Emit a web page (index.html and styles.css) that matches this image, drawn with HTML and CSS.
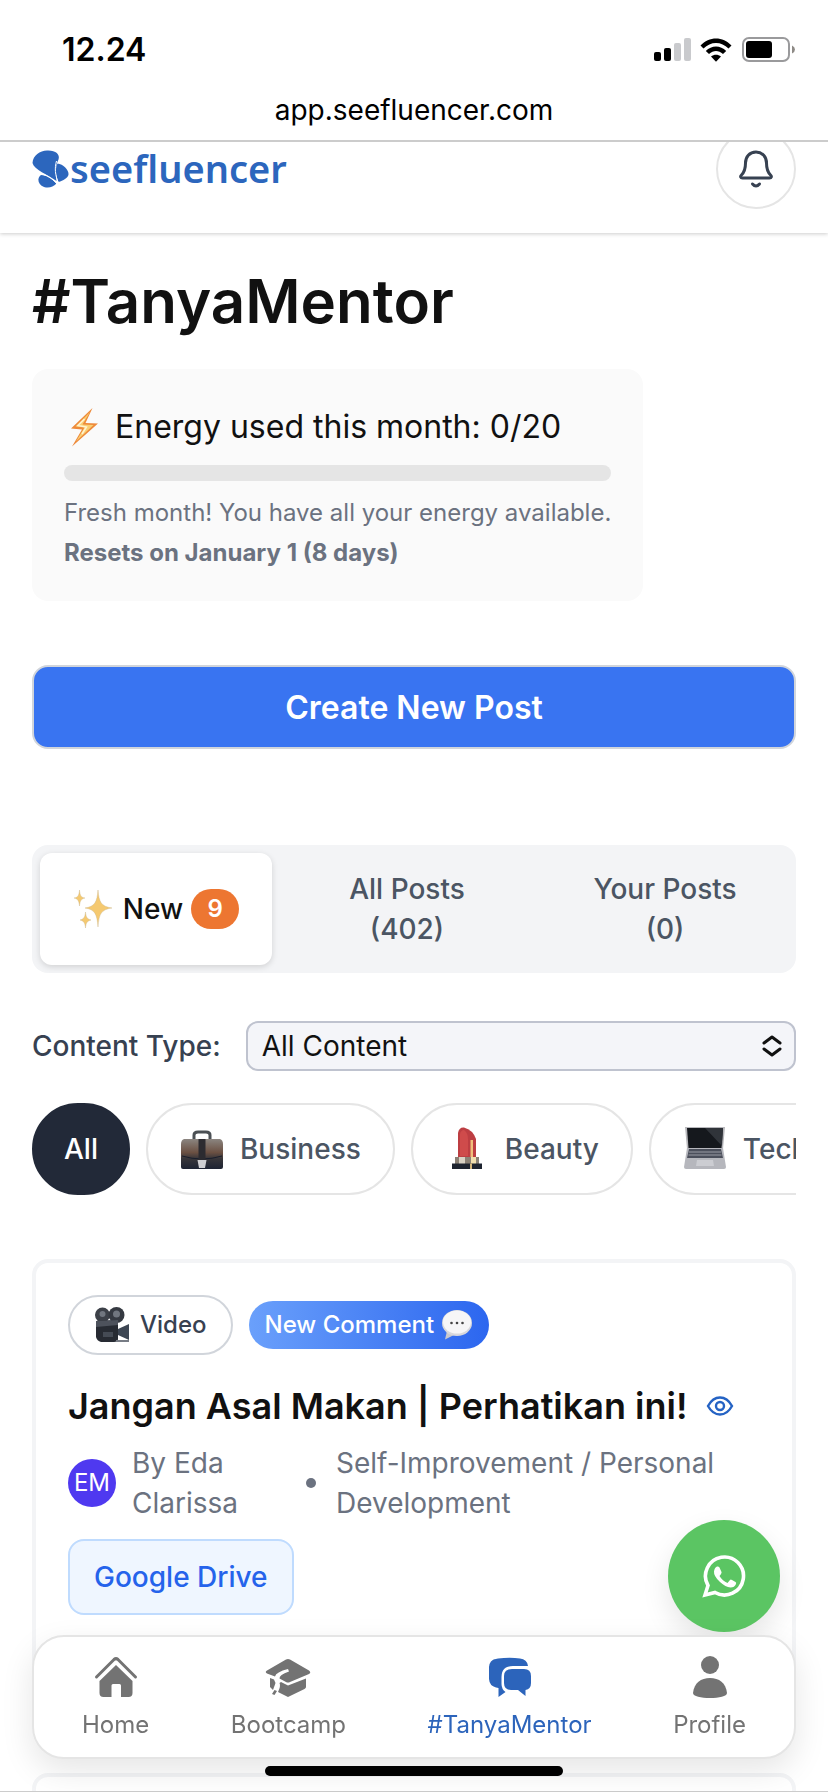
FILE: index.html
```html
<!DOCTYPE html>
<html lang="id">
<head>
<meta charset="utf-8">
<meta name="viewport" content="width=device-width, initial-scale=1">
<title>#TanyaMentor</title>
<link rel="stylesheet" href="styles.css">
</head>
<body>
<div class="device-bar">
  <div class="status">
    <span class="clock">12.24</span>
    <div class="status-icons">
      <svg width="38" height="24" viewBox="0 0 38 24" aria-hidden="true">
        <rect x="0" y="14" width="7" height="9" rx="2"/>
        <rect x="10" y="10" width="7" height="13" rx="2"/>
        <rect x="20" y="5" width="7" height="18" rx="2" fill="#c9cacd"/>
        <rect x="30" y="0" width="7" height="23" rx="2" fill="#c9cacd"/>
      </svg>
      <svg width="34" height="24" viewBox="0 0 34 24" aria-hidden="true">
        <path d="M0.500 7.500C9 -2 23 -2 31.500 7.500L28.500 10.500C21.500 3 10.500 3 3.500 10.500Z"/>
        <path d="M5.800 13C11.500 7 20.500 7 26.200 13L23 16C18.500 12 13.500 12 9 16Z"/>
        <path d="M11 18.500C14 16 18 16 21 18.500L16 23.800Z"/>
      </svg>
      <svg width="54" height="26" viewBox="0 0 54 26" aria-hidden="true">
        <rect x="1" y="1" width="46" height="23" rx="6" fill="none" stroke="#9a9a9c" stroke-width="2"/>
        <rect x="4" y="4" width="26" height="17" rx="3"/>
        <path d="M50 8.500Q53 10 53 12.500T50 16.500Z" fill="#8e8a86"/>
      </svg>
    </div>
  </div>
  <div class="address">app.seefluencer.com</div>
</div>

<div class="page">
  <header class="header">
    <a class="logo" href="#" aria-label="seefluencer">
      <svg width="38" height="38" viewBox="0 0 38 38" aria-hidden="true">
        <path d="M0.500 13C1 5 8 1 15 0.500C23 0 28.500 4 26.500 9.500C24 15 23.500 18 24.500 31C16 24.500 2 20 0.500 13Z"/>
        <path d="M25.500 13.500C31 14 37 20 36.500 24.500C36 28 31 30.500 26.500 32C23.500 26 23 18 25.500 13.500Z"/>
        <path d="M9 25C14 25 20 28.500 24.500 33.500C21 37 17 38.500 12 37C6 35 4.500 28 9 25Z"/>
        <path d="M24.500 11C22.500 18 23 25 26.500 33" fill="none" stroke="#fff" stroke-width="1"/>
        <path d="M7 23.500C14 24.500 20 28 25 34" fill="none" stroke="#fff" stroke-width="1"/>
      </svg>
      <span class="logo-text">seefluencer</span>
    </a>
    <button class="bell" type="button" aria-label="Notifications">
      <svg width="36" height="40" viewBox="0 0 36 40" fill="none" stroke="#374151" stroke-width="3" stroke-linecap="round" stroke-linejoin="round" aria-hidden="true">
        <path d="M18 3C11.500 3 7.500 8 7.500 14C7.500 21 6 23.500 3.500 26C2 27.500 2.500 29 4.500 29H31.500C33.500 29 34 27.500 32.500 26C30 23.500 28.500 21 28.500 14C28.500 8 24.500 3 18 3Z"/>
        <path d="M14.500 35Q18 39 21.500 35"/>
      </svg>
    </button>
  </header>

  <main class="main">
    <h1 class="title">#TanyaMentor</h1>

    <section class="energy">
      <p class="energy-head">
        <svg width="36" height="40" viewBox="0 0 36 40" aria-hidden="true">
          <path d="M28.500 1L7 21.500L18 22.500L8 39.500L34 16.500L21.500 16Z" fill="#ee8a3a"/>
          <path d="M26 5L11.500 19.500L20.500 20.500L12 34.500L29.500 18L18.500 17.500Z" fill="#f9cf73"/>
          <path d="M20.500 12L14 18.500L22.500 20L18 27" fill="none" stroke="#fff3d0" stroke-width="1.500"/>
        </svg>
        Energy used this month: 0/20
      </p>
      <div class="meter" role="progressbar" aria-label="Energy used" aria-valuenow="0" aria-valuemin="0" aria-valuemax="20"></div>
      <p class="energy-note">Fresh month! You have all your energy available.</p>
      <p class="energy-reset">Resets on January 1 (8 days)</p>
    </section>

    <button class="create" type="button">Create New Post</button>

    <div class="tabs" role="tablist">
      <button class="tab tab-active" type="button" role="tab" aria-selected="true">
        <svg width="42" height="38" viewBox="0 0 42 38" fill="#f5c970" stroke="#c9b58a" stroke-width=".4" aria-hidden="true">
          <path d="M25 0C26 12 28 16.500 39 18C28 19.500 26 24 25 37C24 24 22 19.500 12 18C22 16.500 24 12 25 0Z"/>
          <path d="M6.500 0C7 5.500 8 7.500 12 8C8 8.800 7 11 6.500 16C6 11 5 8.800 1 8C5 7.500 6 5.500 6.500 0Z"/>
          <path d="M12.500 22C13 27 14 29 18 30C14 31 13 33 12.500 38C12 33 11 31 7 30C11 29 12 27 12.500 22Z"/>
        </svg>
        <span>New</span>
        <span class="count">9</span>
      </button>
      <button class="tab" type="button" role="tab" aria-selected="false"><span>All Posts<br>(402)</span></button>
      <button class="tab" type="button" role="tab" aria-selected="false"><span>Your Posts<br>(0)</span></button>
    </div>

    <div class="filter">
      <label class="filter-label" for="content-type">Content Type:</label>
      <div class="select-wrap">
        <select class="select" id="content-type">
          <option>All Content</option>
        </select>
        <svg class="select-arrows" width="20" height="22" viewBox="0 0 20 22" fill="none" stroke="#111" stroke-width="3" stroke-linecap="round" stroke-linejoin="round" aria-hidden="true">
          <path d="M2 8L10 2L18 8M2 14L10 20L18 14"/>
        </svg>
      </div>
    </div>

    <div class="topics">
      <button class="topic topic-active" type="button">All</button>
      <button class="topic" type="button">
        <svg width="44" height="44" viewBox="0 0 44 44" aria-hidden="true">
          <defs><linearGradient id="leather" x1="0" y1="0" x2="0" y2="1"><stop offset="0" stop-color="#8b8580"/><stop offset=".45" stop-color="#6b5042"/><stop offset=".65" stop-color="#38363a"/><stop offset="1" stop-color="#1d2333"/></linearGradient></defs>
          <path d="M14 13V8Q14 5 18 5H26Q30 5 30 8V13" fill="none" stroke="#4b5054" stroke-width="3"/>
          <path d="M4 12H40Q43 13 43 17V40Q43 42 41 42H3Q1 42 1 40V17Q1 13 4 12Z" fill="url(#leather)"/>
          <path d="M2 29Q22 35 42 29" fill="none" stroke="#191e2c" stroke-width="1"/>
          <rect x="18.500" y="12" width="7" height="22" fill="#2c2b30"/>
          <path d="M17.500 33H26.500L25 41H19Z" fill="#cfcfd2"/>
        </svg>
        Business
      </button>
      <button class="topic" type="button">
        <svg width="44" height="44" viewBox="0 0 44 44" aria-hidden="true">
          <path d="M13 32V6Q14 0 19 0.500Q28 3 31 12V32Z" fill="#bd3e42"/>
          <path d="M15 29V7Q16 3 19 3Q23 6 23 12V29Z" fill="#cf4b4b"/>
          <path d="M25.500 13H28V31H25.500Z" fill="#f0c07b"/>
          <path d="M10 30H34V37H10Z" fill="#8b8175"/>
          <path d="M14 30H20V37H14Z" fill="#d9d2c4"/><path d="M26 30H31V37H26Z" fill="#f1dfae"/>
          <path d="M7 36.500H37V42H7Z" fill="#1e2430"/><path d="M25 36.500H27V42H25Z" fill="#d5b77c"/>
        </svg>
        Beauty
      </button>
      <button class="topic" type="button">
        <svg width="44" height="44" viewBox="0 0 44 44" aria-hidden="true">
          <path d="M2 0H42L40 22H4Z" fill="#b8b8bc"/>
          <path d="M4 1H40L38.500 21H5.500Z" fill="#15181d"/>
          <path d="M22 1H40L39 19Z" fill="#30343a"/>
          <path d="M4 21H40L43 40Q43 42 41 42H3Q1 42 1 40Z" fill="#b6b7bd"/>
          <path d="M6 22H38L40 31H4Z" fill="#4b4f5b"/>
          <path d="M6 25H38M5.500 28H38.500" stroke="#9a9ca5"/>
          <path d="M14 33H30L31 39H13Z" fill="#cccdd2"/>
        </svg>
        Tech
      </button>
    </div>

    <article class="post">
      <div class="post-tags">
        <span class="kind">
          <svg width="36" height="36" viewBox="0 0 36 36" aria-hidden="true">
            <circle cx="8.500" cy="8" r="7.500" fill="#3c4048"/><circle cx="22.500" cy="8" r="8" fill="#353941"/>
            <circle cx="8.500" cy="7" r="3" fill="#71767f"/><circle cx="22.500" cy="7" r="3.500" fill="#71767f"/>
            <path d="M2 14L24 13V32Q24 35 20 35H7Q3 34 2 30Z" fill="#272b33"/>
            <path d="M2 14L24 13V18L2 20Z" fill="#4d525c"/>
            <path d="M24 22L35 17V33L24 28Z" fill="#3d4653"/>
            <rect x="9" y="25" width="10" height="5" fill="#454b55"/>
            <path d="M22 34H35" stroke="#777c85" stroke-width="2"/>
          </svg>
          Video
        </span>
        <span class="fresh">
          New Comment
          <svg width="32" height="32" viewBox="0 0 32 32" aria-hidden="true">
            <path d="M6 22L4 30.500L13 26Z" fill="#c9c9ce"/>
            <ellipse cx="16" cy="14" rx="15" ry="13" fill="#d8d8dc"/>
            <ellipse cx="16" cy="13" rx="14" ry="11.500" fill="#f6f6f7"/>
            <g fill="#444"><circle cx="10.500" cy="14" r="1.300"/><circle cx="16" cy="14" r="1.300"/><circle cx="21.500" cy="14" r="1.300"/></g>
          </svg>
        </span>
      </div>
      <div class="post-heading">
        <h2 class="post-title">Jangan Asal Makan | Perhatikan ini!</h2>
        <svg width="28" height="20" viewBox="0 0 28 20" fill="none" stroke="#2563c4" stroke-width="2.400" aria-hidden="true">
          <path d="M2 10C5 4.500 9 1.500 14 1.500S23 4.500 26 10C23 15.500 19 18.500 14 18.500S5 15.500 2 10Z"/>
          <circle cx="14" cy="10" r="4"/>
        </svg>
      </div>
      <div class="meta">
        <span class="avatar">EM</span>
        <span class="author">By Eda Clarissa</span>
        <span class="dot"></span>
        <span class="category">Self-Improvement / Personal Development</span>
      </div>
      <a class="drive" href="#">Google Drive</a>
    </article>

    <article class="post"></article>
  </main>
</div>

<a class="whatsapp" href="#" aria-label="WhatsApp">
  <svg width="44" height="44" viewBox="0 0 44 44" aria-hidden="true">
    <path d="M3 41L6 31.500A19 19 0 1 1 13 38.500Z" fill="none" stroke="#fff" stroke-width="3.600"/>
    <path d="M15 12.500Q16.500 12 17.500 13.500L19.500 18Q20 19 17.500 22Q20.500 27 25.500 29L28 26Q28.700 25.200 30 26L33.500 28Q34.500 28.700 34 30Q32.500 33.500 28.500 33.500Q23.500 33 18 28Q11.500 22 12 17.500Q12.500 13.500 15 12.500Z" fill="#fff"/>
  </svg>
</a>

<nav class="nav">
  <a class="nav-item" href="#">
    <svg width="44" height="44" viewBox="0 0 44 44" aria-hidden="true">
      <path d="M2.500 22L20 4.500Q22 2.800 24 4.500L41.500 22" fill="none" stroke="currentColor" stroke-width="3" stroke-linecap="round"/>
      <path d="M22 10L38.500 26V38Q38.500 42 34.500 42H27V30.500Q27 29 25.500 29H19Q17.500 29 17.500 30.500V42H9.500Q5.500 42 5.500 38V26Z"/>
    </svg>
    Home
  </a>
  <a class="nav-item" href="#">
    <svg width="48" height="44" viewBox="0 0 48 44" aria-hidden="true">
      <path d="M24 4Q25 4 26 4.500L45 15.500Q47.500 17.500 45 19L26 27Q24 28 22 27L15.500 23.500Q15 20 25 16.500L24 14Q12 17 11 21.500L3 18.500Q0.500 17 3 15.500L22 4.500Q23 4 24 4Z"/>
      <path d="M17 27L24 30.500L42 23.500V32Q42 33 40.500 34L24 42L14 37Q17 31 15.500 28Z"/>
      <path d="M6 23L10 24.500L11.500 28L9 35L6 32Z"/>
      <path d="M10.500 35L13 36L10.500 40L8 39Z"/>
    </svg>
    Bootcamp
  </a>
  <a class="nav-item nav-current" href="#" aria-current="page">
    <svg width="44" height="44" viewBox="0 0 44 44" aria-hidden="true">
      <path d="M10 3.500Q22 2 32 3.500Q39 4 40 11H25Q13.500 11 13.500 22V29Q13.500 34 17.500 37L10.500 42V33Q1.500 32 1 24V12Q1.500 4.500 10 3.500Z"/>
      <path d="M24 14H36Q43 14 43 21V28Q43 34 37.500 35V41L30 35H23Q16 35 16 28V21Q16 14 24 14Z"/>
    </svg>
    #TanyaMentor
  </a>
  <a class="nav-item" href="#">
    <svg width="44" height="44" viewBox="0 0 44 44" aria-hidden="true">
      <circle cx="22" cy="10" r="9"/>
      <path d="M5 38C6 28 13 23 22 23S38 28 39 38C39 41.500 31 43 22 43S5 41.500 5 38Z"/>
    </svg>
    Profile
  </a>
</nav>
<div class="home-indicator"></div>
</body>
</html>
```

FILE: styles.css
```css
* {
  box-sizing: border-box;
}

body {
  margin: 0;
  height: 100vh;
  display: flex;
  flex-direction: column;
  overflow: hidden;
  background: #fff;
  color: #111;
  font-family: Inter, "Liberation Sans", sans-serif;
  font-size: 28px;
  line-height: 40px;
}

button, select {
  font: inherit;
  color: inherit;
  margin: 0;
}

a {
  color: inherit;
  text-decoration: none;
}

h1, h2, p {
  margin: 0;
}

svg {
  display: block;
  flex: none;
}

.device-bar {
  flex: none;
  border-bottom: 2px solid #ccc;
  color: #000;
}

.status {
  display: flex;
  justify-content: space-between;
  align-items: center;
  padding: 28px 32px 0 62px;
  height: 72px;
}

.clock {
  font-size: 32px;
  font-weight: 600;
}

.status-icons {
  display: flex;
  align-items: center;
  gap: 8px;
}

.address {
  padding: 18px 0 10px;
  text-align: center;
}

.page {
  flex: 1;
  min-height: 0;
  overflow: hidden;
  border-bottom: 1px solid #ccc;
}

/* Scrolled a little way under the address bar. */
.header {
  height: 128px;
  margin-top: -37px;
  padding: 0 32px;
  display: flex;
  align-items: center;
  justify-content: space-between;
  box-shadow: 0 1px 4px rgba(0, 0, 0, .2);
}

.logo {
  display: flex;
  align-items: center;
  color: #2c66bd;
  fill: currentColor;
}

.logo-text {
  padding-bottom: 2px;
  font-family: "Noto Sans", sans-serif;
  font-size: 38px;
  font-weight: 600;
}

.bell {
  width: 80px;
  height: 80px;
  display: grid;
  place-items: center;
  border: 2px solid #e5e5e5;
  border-radius: 50%;
  background: #fff;
}

.main {
  padding: 32px;
}

.title {
  font-size: 60px;
  line-height: 72px;
  font-weight: 600;
}

.energy {
  width: fit-content;
  margin-top: 32px;
  padding: 32px;
  border-radius: 16px;
  background: #fafafa;
}

.energy-head {
  display: flex;
  align-items: center;
  gap: 15px;
  padding-top: 2px;
  font-size: 32px;
  line-height: 48px;
}

.meter {
  height: 16px;
  margin: 14px 0 16px;
  border-radius: 8px;
  background: #e5e5e5;
}

.energy-note,
.energy-reset {
  font-size: 24px;
  line-height: 32px;
  color: #6b7280;
}

.energy-reset {
  margin-top: 8px;
  font-weight: 700;
}

.create {
  display: block;
  width: 100%;
  margin-top: 64px;
  padding: 21px 20px 19px;
  border: 2px solid #d1d5db;
  border-radius: 16px;
  background: #3974f1;
  color: #fff;
  font-size: 32px;
  font-weight: 600;
}

.tabs {
  display: grid;
  grid-template-columns: 232fr 270fr 246fr;
  margin-top: 96px;
  padding: 8px;
  border-radius: 16px;
  background: #f3f4f6;
}

.tab {
  display: flex;
  align-items: center;
  justify-content: center;
  gap: 8px;
  padding: 16px;
  border: 0;
  border-radius: 12px;
  background: none;
  color: #4b5563;
  font-weight: 500;
}

.tab-active {
  background: #fff;
  color: #111;
  box-shadow: 0 2px 6px rgba(0, 0, 0, .14);
}

.count {
  min-width: 48px;
  border-radius: 20px;
  background: #ed7631;
  color: #fff;
  font-size: 24px;
  font-weight: 600;
  text-align: center;
}

.filter {
  display: flex;
  align-items: center;
  gap: 25px;
  margin-top: 48px;
}

.filter-label {
  color: #374151;
  font-weight: 500;
}

.select-wrap {
  flex: 1;
  position: relative;
}

.select {
  display: block;
  width: 100%;
  height: 50px;
  padding: 0 48px 0 14px;
  border: 2px solid #bfc3cf;
  border-radius: 12px;
  background: #f4f5f9;
  color: #111;
  appearance: none;
}

.select-arrows {
  position: absolute;
  top: 14px;
  right: 14px;
  pointer-events: none;
}

.topics {
  display: flex;
  gap: 16px;
  margin-top: 32px;
  overflow: hidden;
}

.topic {
  flex: none;
  display: flex;
  align-items: center;
  gap: 16px;
  height: 92px;
  padding: 0 32px;
  border: 2px solid #e5e5e5;
  border-radius: 46px;
  background: #fff;
  color: #4b5563;
  font-weight: 500;
}

.topic-active {
  padding: 0 30px;
  border-color: #222938;
  background: #222938;
  color: #fff;
}

.post {
  margin-top: 64px;
  padding: 32px 32px 122px;
  border: 4px solid #f3f4f6;
  border-radius: 16px;
  background: #fff;
}

.post + .post {
  margin-top: 32px;
}

.post-tags {
  display: flex;
  align-items: center;
  gap: 16px;
  font-size: 24px;
  font-weight: 500;
}

.kind,
.fresh {
  display: flex;
  align-items: center;
  gap: 10px;
}

.kind {
  height: 60px;
  padding: 0 24px;
  border: 2px solid #d1d5db;
  border-radius: 30px;
  color: #374151;
}

.fresh {
  gap: 7px;
  height: 48px;
  padding: 0 16px;
  border-radius: 24px;
  background: linear-gradient(90deg, #6aa0fb, #2c66ef);
  color: #fff;
}

.post-heading {
  display: flex;
  align-items: center;
  gap: 18px;
  margin-top: 24px;
}

.post-title {
  font-size: 36px;
  line-height: 54px;
  font-weight: 600;
}

.meta {
  display: flex;
  align-items: center;
  gap: 16px;
  margin-top: 10px;
  color: #6b7280;
}

.avatar {
  flex: none;
  width: 48px;
  height: 48px;
  border-radius: 50%;
  background: #4f39f0;
  color: #fff;
  font-size: 24px;
  line-height: 48px;
  text-align: center;
}

.author {
  flex: 158;
}

.dot {
  flex: none;
  width: 10px;
  height: 10px;
  margin-right: 4px;
  border-radius: 50%;
  background: #6b7280;
}

.category {
  flex: 424;
}

.drive {
  display: inline-block;
  margin-top: 16px;
  padding: 16px 24px;
  border: 2px solid #bfdbfe;
  border-radius: 16px;
  background: #eff6ff;
  color: #2563eb;
  font-weight: 500;
}

.whatsapp {
  position: fixed;
  right: 48px;
  bottom: 160px;
  width: 112px;
  height: 112px;
  display: grid;
  place-items: center;
  border-radius: 50%;
  background: #5bc563;
  box-shadow: 0 12px 28px rgba(0, 0, 0, .1);
}

.nav {
  position: fixed;
  left: 32px;
  right: 32px;
  bottom: 33px;
  display: flex;
  justify-content: space-between;
  padding: 18px 48px 14px;
  border: 2px solid #e5e5e5;
  border-radius: 32px;
  background: #fff;
  box-shadow: 0 12px 32px rgba(0, 0, 0, .1);
}

.nav-item {
  display: flex;
  flex-direction: column;
  align-items: center;
  gap: 8px;
  color: #737373;
  fill: currentColor;
  font-size: 24px;
  line-height: 36px;
}

.nav-current {
  color: #2c64bb;
}

.home-indicator {
  position: fixed;
  bottom: 16px;
  left: 32%;
  right: 32%;
  height: 10px;
  border-radius: 5px;
  background: #000;
}
```
